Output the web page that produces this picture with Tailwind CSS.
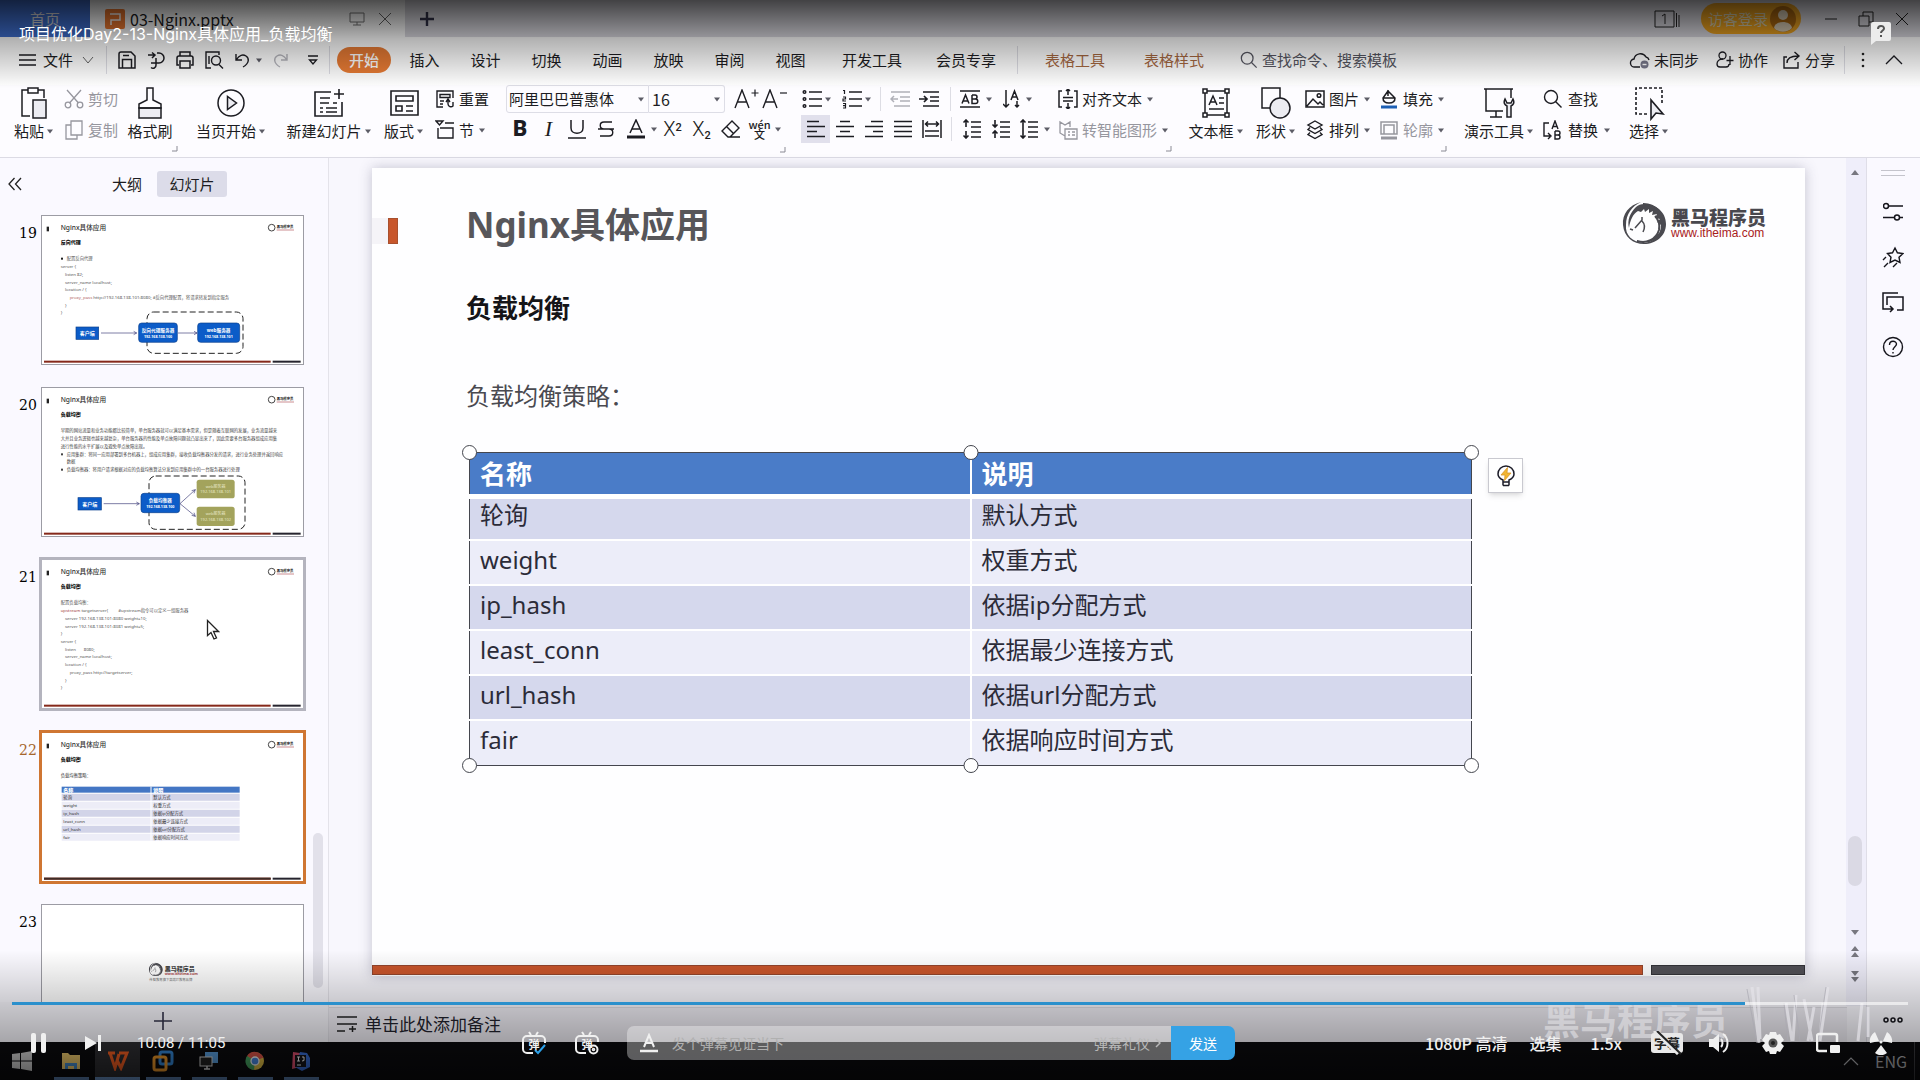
<!DOCTYPE html>
<html lang="zh-CN">
<head>
<meta charset="utf-8">
<meta name="viewport" content="width=device-width, initial-scale=1">
<title>项目优化Day2-13-Nginx具体应用_负载均衡</title>
<script src="https://cdn.jsdelivr.net/npm/@tailwindcss/browser@4"></script>
</head>
<body class="relative flex h-screen flex-col overflow-hidden bg-[#f8f7fd] font-['Noto_Sans_CJK_SC',sans-serif] text-[15px] leading-5 text-[#1c1c22]">

<!-- Icon sprite -->
<svg class="hidden" aria-hidden="true">
  <symbol id="caret" viewBox="0 0 8 5"><path d="M1 0.5h6L4 4.5z" fill="#5c5c66"/></symbol>
  <symbol id="corner" viewBox="0 0 6 6"><path d="M5 0v5H0" fill="none" stroke="#8a8a94"/></symbol>
  <symbol id="menu" viewBox="0 0 20 14" fill="none" stroke="currentColor" stroke-width="1.4"><path d="M1 2h17M1 7h17M1 12h17"/></symbol>
  <symbol id="chev-down" viewBox="0 0 14 10" fill="none" stroke="currentColor"><path d="M2 2l5 6 5-6"/></symbol>
  <symbol id="chev-up" viewBox="0 0 18 12" fill="none" stroke="currentColor" stroke-width="1.3"><path d="M1 10l8-8 8 8"/></symbol>
  <symbol id="save" viewBox="0 0 20 20" fill="none" stroke="currentColor" stroke-width="1.5"><path d="M2 4a2 2 0 012-2h10l4 4v12H2zM5.5 18V9.500h9V18M6 5.500h6"/></symbol>
  <symbol id="export" viewBox="0 0 20 20" fill="none" stroke="currentColor" stroke-width="1.5"><path d="M2 5h6M6 2.500l3 2.500-3 3M11 3h2a5 5 0 010 10H5M10 8v7a3 3 0 01-5 2.500"/></symbol>
  <symbol id="print" viewBox="0 0 20 20" fill="none" stroke="currentColor" stroke-width="1.5"><path d="M5 6V2h10v4M4 15H2V8a2 2 0 012-2h12a2 2 0 012 2v7h-2M5 11h10v7H5z"/></symbol>
  <symbol id="preview" viewBox="0 0 20 20" fill="none" stroke="currentColor" stroke-width="1.4"><path d="M7 18H2V2h13v3M15 14.500l4 4M5 6v8"/><circle cx="12" cy="10.500" r="4.500"/></symbol>
  <symbol id="undo" viewBox="0 0 18 18" fill="none" stroke="currentColor" stroke-width="1.400"><path d="M2 3v6h6M2.500 8.500C5 4 9 3 12 5s4 7-3 11"/></symbol>
  <symbol id="more-down" viewBox="0 0 12 12" fill="none" stroke="currentColor" stroke-width="1.300"><path d="M1 2h10M2.500 6h7L6 10z"/></symbol>
  <symbol id="search" viewBox="0 0 20 20" fill="none" stroke="currentColor" stroke-width="1.400"><circle cx="8" cy="8" r="6.500"/><path d="M12.500 12.500l6 6"/></symbol>
  <symbol id="cloud" viewBox="0 0 22 20" fill="none" stroke="currentColor" stroke-width="1.400"><path d="M11 17H6a4 4 0 01-1-8 6.500 6.500 0 0112-2 4 4 0 013 3"/><circle cx="15.500" cy="14.500" r="4" fill="#77778a" stroke="none"/><path d="M13.500 14.500h4" stroke="#fff"/></symbol>
  <symbol id="collab" viewBox="0 0 20 20" fill="none" stroke="currentColor" stroke-width="1.300"><circle cx="7.500" cy="5.500" r="3.500"/><path d="M8 9c-4 0-6 2-6 5 0 2 1 3 3 3h6c2 0 3-1 3-3M15 6v9M11.500 10.500h7"/></symbol>
  <symbol id="share" viewBox="0 0 20 20" fill="none" stroke="currentColor" stroke-width="1.400"><path d="M5 7H2v11h14v-6M5 13c0-5 4-7 11-7M12.500 2l4.500 4-4.500 4"/></symbol>
  <symbol id="paste" viewBox="0 0 30 36" fill="none" stroke="currentColor" stroke-width="1.500"><path d="M11 31H3V5h6M19 5h6v8M9 3h10v5H9z"/><rect x="14" y="15" width="13" height="18" fill="#ececf2"/></symbol>
  <symbol id="cut" viewBox="0 0 20 20" fill="none" stroke="currentColor" stroke-width="1.300"><circle cx="4" cy="16" r="2.800"/><circle cx="16" cy="16" r="2.800"/><path d="M3 1l11.500 13M17 1L5.500 14"/></symbol>
  <symbol id="copy" viewBox="0 0 20 20" fill="none" stroke="currentColor" stroke-width="1.300"><path d="M7 1h11v14H7zM7 5H2v14h11v-4"/></symbol>
  <symbol id="brush" viewBox="0 0 26 34" fill="none" stroke="currentColor" stroke-width="1.500"><path d="M2 22h22v10H2z" fill="#ececf2"/><path d="M10 2h6v12l8 4v4H2v-4l8-4z"/></symbol>
  <symbol id="play-o" viewBox="0 0 30 30" fill="none" stroke="currentColor" stroke-width="1.500"><circle cx="15" cy="15" r="13"/><path d="M11.500 8.500v13l9-6.500z" fill="#ececf2"/></symbol>
  <symbol id="new-slide" viewBox="0 0 32 30" fill="none" stroke="currentColor" stroke-width="1.600"><path d="M18 4H2v24h27V14M26 1v10M21 6h10M7 10h10M7 15h9M20 15h4M7 20h3M13 20h11M7 24h3M13 24h11"/></symbol>
  <symbol id="layout" viewBox="0 0 30 30" fill="none" stroke="currentColor" stroke-width="1.600"><path d="M2 3h27v24H2zM7 8h17v5H7zM7 18h6v5H7zM17 18h7M17 23h7"/></symbol>
  <symbol id="reset" viewBox="0 0 20 20" fill="none" stroke="currentColor" stroke-width="1.400"><path d="M18 9V2H2v16h6M5 5.500h10v3H5zM5 12h4M5 15h3M11 13l2-3 2 3M13 11v4a3 3 0 005 2v-4"/></symbol>
  <symbol id="section" viewBox="0 0 20 20" fill="none" stroke="currentColor" stroke-width="1.400"><path d="M1 1h7L4.500 5zM10 3h9M3 8v10h15V8H5"/></symbol>
  <symbol id="font-a" viewBox="0 0 18 20" fill="none" stroke="currentColor" stroke-width="1.400"><path d="M2 19L9 1l7 18M4.500 13h9"/></symbol>
  <symbol id="plus" viewBox="0 0 16 16" fill="none" stroke="currentColor" stroke-width="2.400"><path d="M8 1v14M1 8h14"/></symbol>
  <symbol id="eraser" viewBox="0 0 22 20" fill="none" stroke="currentColor" stroke-width="1.400"><path d="M2 12L12 2l7 7-9 9H8zM8 18h12"/><path d="M6.500 7.500l7 7"/></symbol>
  <symbol id="bullets" viewBox="0 0 20 20" fill="none" stroke="currentColor" stroke-width="1.500"><circle cx="2.500" cy="3" r="1.300"/><circle cx="2.500" cy="10" r="1.300"/><circle cx="2.500" cy="17" r="1.300"/><path d="M7 3h13M7 10h13M7 17h13"/></symbol>
  <symbol id="numbers" viewBox="0 0 20 20" fill="none" stroke="currentColor" stroke-width="1.500"><path d="M7 3h13M7 10h13M7 17h13"/><path d="M1 1.500h1.500V5M1 8h2.500v2H1v2h3M1 14.500h2.500V19H1M1 16.700h2.500" stroke-width="1.200"/></symbol>
  <symbol id="outdent" viewBox="0 0 20 20" fill="none" stroke="currentColor" stroke-width="1.500"><path d="M1 3h19M10 8h10M10 12h10M4 17h16M1 10h7M4 7l-3 3 3 3"/></symbol>
  <symbol id="indent" viewBox="0 0 20 20" fill="none" stroke="currentColor" stroke-width="1.700"><path d="M4 3h16M11 8h9M11 12h9M4 17h16M0 10h8M5 7l3 3-3 3"/></symbol>
  <symbol id="char-space" viewBox="0 0 22 20" fill="none" stroke="currentColor" stroke-width="1.500"><path d="M1 2h20M1 18h20M3 14.500L6.500 6l3.500 8.500M4 12h5M13 6v8.500h3.500a2 2 0 000-4.500H13M13 6h3a2 2 0 010 4"/></symbol>
  <symbol id="sort" viewBox="0 0 18 20" fill="none" stroke="currentColor" stroke-width="1.500"><path d="M3 1v17M0 15l3 3 3-3M8 11l3.500-9L15 11M9 8h5M14 12v6M12 16l2 2 2-2"/></symbol>
  <symbol id="al" viewBox="0 0 20 20" fill="none" stroke="currentColor" stroke-width="1.600"><path d="M1 2.500h12M1 7.500h18M1 12.500h10M1 17.500h18"/></symbol>
  <symbol id="ac" viewBox="0 0 20 20" fill="none" stroke="currentColor" stroke-width="1.600"><path d="M5 2.500h10M1 7.500h18M5 12.500h10M1 17.500h18"/></symbol>
  <symbol id="ar" viewBox="0 0 20 20" fill="none" stroke="currentColor" stroke-width="1.600"><path d="M7 2.500h12M1 7.500h18M9 12.500h10M1 17.500h18"/></symbol>
  <symbol id="aj" viewBox="0 0 20 20" fill="none" stroke="currentColor" stroke-width="1.600"><path d="M1 2.500h18M1 7.500h18M1 12.500h18M1 17.500h18"/></symbol>
  <symbol id="ad" viewBox="0 0 20 20" fill="none" stroke="currentColor" stroke-width="1.500"><path d="M1 1v18M19 1v18M4 5h12M6 2.500L3.500 5 6 7.500M14 2.500L16.500 5 14 7.500M3 12h14M3 17h14"/></symbol>
  <symbol id="para-b" viewBox="0 0 20 20" fill="none" stroke="currentColor" stroke-width="1.600"><path d="M9 3h10M9 8h10M9 13h10M9 18h10M4 8V1M1.500 3.500L4 1l2.500 2.500M4 12v7M1.500 16.500L4 19l2.500-2.500"/></symbol>
  <symbol id="para-a" viewBox="0 0 20 20" fill="none" stroke="currentColor" stroke-width="1.600"><path d="M9 3h10M9 8h10M9 13h10M9 18h10M4 1v7M1.500 5.500L4 8l2.500-2.500M4 19v-7M1.500 14.500L4 12l2.500 2.500"/></symbol>
  <symbol id="line-h" viewBox="0 0 20 20" fill="none" stroke="currentColor" stroke-width="1.600"><path d="M9 3h10M9 8h10M9 13h10M9 18h10M4 1v18M1.500 3.500L4 1l2.500 2.500M1.500 16.500L4 19l2.500-2.500"/></symbol>
  <symbol id="valign" viewBox="0 0 20 20" fill="none" stroke="currentColor" stroke-width="1.500"><path d="M4 2H1v16h3M16 2h3v16h-3M5 8.500h10M5 12h10M10 0v6M8 2l2-2 2 2M10 14v6M8 18l2 2 2-2"/></symbol>
  <symbol id="smart" viewBox="0 0 20 20" fill="none" stroke="currentColor" stroke-width="1.300"><path d="M7 16l-5-3V2l5 3 5-3v5M7 9h12v10H7zM10 12h2M14 12h3M10 15h2M14 15h3"/></symbol>
  <symbol id="textbox" viewBox="0 0 30 32" fill="none" stroke="currentColor" stroke-width="1.500"><path d="M4 4h22v24H4z"/><path d="M2 2h4v4H2zM24 2h4v4h-4zM2 26h4v4H2zM24 26h4v4h-4z" fill="#fff"/><path d="M8 18l4-9 4 9M9.500 15h5M18 11h5M18 16h5M8 22h15"/></symbol>
  <symbol id="shapes" viewBox="0 0 32 34" fill="none" stroke="currentColor" stroke-width="1.500"><path d="M2 2h18v20H2z"/><circle cx="20" cy="22" r="10" fill="#ececf2"/></symbol>
  <symbol id="picture" viewBox="0 0 20 20" fill="none" stroke="currentColor" stroke-width="1.500"><path d="M1 2h18v16H1zM2 17l6-7 5 5 2-2 3 3"/><circle cx="14" cy="6.500" r="1.800"/></symbol>
  <symbol id="layers" viewBox="0 0 20 20" fill="none" stroke="currentColor" stroke-width="1.400"><path d="M10 1l7 4-7 4-7-4zM5 7.500L3 9.500l7 4 7-4-2-2M5 12.500l-2 2 7 4 7-4-2-2"/></symbol>
  <symbol id="fill" viewBox="0 0 20 20" fill="none" stroke="currentColor" stroke-width="1.500"><path d="M9 1v6M9 2l7 7c0 3-2 5-6 5s-6-2-6-5zM4 9h12"/><path d="M2 18h16" stroke="#1d5fb4" stroke-width="3"/></symbol>
  <symbol id="outline" viewBox="0 0 20 20" fill="none" stroke="currentColor" stroke-width="1.500"><path d="M2 2h16v12H2zM5 14V5h10v9"/><path d="M2 18h16" stroke-width="3"/></symbol>
  <symbol id="present" viewBox="0 0 32 34" fill="none" stroke="currentColor" stroke-width="1.500"><path d="M1 3h29M3 3v22h17M28 3v9M13 25v6M7 31h12"/><path d="M22 13c-2 4 0 6 2 7v11h4V20c2-1 4-3 2-7l-2 4h-4z" fill="#ececf2"/></symbol>
  <symbol id="replace" viewBox="0 0 20 20" fill="none" stroke="currentColor" stroke-width="1.400"><path d="M6 3H1v13h6M5 13l3 3-3 3M9 9l3-8 3 8M10 6.500h4M12 11v8h3a2 2 0 000-4h-3M12 11h3a2 2 0 010 4"/></symbol>
  <symbol id="select" viewBox="0 0 32 34" fill="none" stroke="currentColor" stroke-width="1.600"><path d="M14 28H3V2h26v16" stroke-dasharray="3 2"/><path d="M18 14v19l5-6 7 1z" fill="#ececf2"/></symbol>
  <symbol id="scroll-up" viewBox="0 0 8 6"><path d="M4 0l4 5H0z" fill="#77777f"/></symbol>
  <!-- brand mark: horse head in a ring -->
  <symbol id="horse" viewBox="0 0 46 46"><path d="M22 4a20 19 0 11-6 37A17 17 0 0038 30c1-6-1-11-4-14" fill="none" stroke="#4a4a50" stroke-width="2"/><path d="M20 2C8 5 1 14 2 25c1 12 10 19 21 19 12 0 22-8 22-20C45 12 35 4 23 4c-3 0-6 1-8 3-6 6-9 13-7 21 1-8 4-14 9-17l3 1 3-3 1 3 4-3v4l4-2-1 4 5-1-2 4 5 1-3 3 4 3c0 10-7 17-17 18C11 42 4 35 5 25 5 14 11 6 20 2z" fill="#4a4a50"/><path d="M9 29l3 1M14 28l7-8v-3M21 21c3 3 3 7 1 11" fill="none" stroke="#4a4a50" stroke-width="1.500"/></symbol>
  <!-- frame shared by the slide miniatures -->
  <symbol id="mini-frame" viewBox="0 0 789 450">
    <rect x="17" y="35" width="7" height="14" fill="#222"/>
    <text x="59" y="46" font-size="20" fill="#333" font-weight="500">Nginx具体应用</text>
    <circle cx="692" cy="38" r="10" fill="none" stroke="#444" stroke-width="3"/>
    <text x="707" y="40" font-size="10" font-weight="900" fill="#333">黑马程序员</text>
    <rect x="707" y="44" width="52" height="2" fill="#b0565a"/>
    <rect x="9" y="437" width="680" height="6" fill="#85291a"/>
    <rect x="695" y="437" width="84" height="6" fill="#26242e"/>
  </symbol>
</svg>

<!-- Title bar -->
<header class="flex h-[37px] shrink-0 items-center bg-[#dcdbe2]">
  <button class="h-full w-[90px] bg-[#3f6fd0] text-[15px] text-[#d8d8dc]">首页</button>
  <div class="flex h-full w-[315px] items-center bg-white pr-3 pl-[15px] text-base">
    <span class="flex size-5 items-center justify-center rounded-[2px] bg-[#f07a30]"><svg class="size-4" viewBox="0 0 16 16" fill="none" stroke="#fff" stroke-width="1.500"><path d="M3 3h10v6H4v5"/></svg></span>
    <span class="ml-[5px]">03-Nginx.pptx</span>
    <svg class="ml-auto size-4" viewBox="0 0 16 16" fill="none" stroke="#777"><path d="M1 2h14v9H1zM8 11v3M4 14h8"/></svg>
    <button aria-label="关闭标签" class="ml-3"><svg class="size-4" viewBox="0 0 16 16" fill="none" stroke="#666"><path d="M2 2l12 12M14 2L2 14"/></svg></button>
  </div>
  <button aria-label="新建标签" class="ml-[14px] text-[#33334a]"><svg class="size-4"><use href="#plus"/></svg></button>
  <div class="ml-auto flex h-full items-center pr-[10px]">
    <svg class="mr-5 h-5 w-7" viewBox="0 0 28 20" fill="none" stroke="#222"><path d="M2 2h19v16H2zM23.500 4v14M26 6v12"/><path d="M9 7l3-2v10"/></svg>
    <button class="mr-[23px] flex h-[31px] w-[100px] items-center justify-between rounded-full bg-[#eea320] pr-1 pl-[7px] text-[15px] text-[#d8d0b0]">访客登录
      <svg class="size-7" viewBox="0 0 28 28"><circle cx="14" cy="14" r="13" fill="#b06a10"/><circle cx="14" cy="10" r="5" fill="#ddd0b8"/><path d="M5 23c1-8 17-8 18 0-5 5-13 5-18 0z" fill="#ddd0b8"/></svg>
    </button>
    <button aria-label="最小化" class="mr-5"><svg class="h-4 w-[14px]" viewBox="0 0 14 16" stroke="#222"><path d="M1 8h12"/></svg></button>
    <button aria-label="还原" class="mr-5"><svg class="size-4" viewBox="0 0 16 16" fill="none" stroke="#222"><path d="M1 5h10v10H1zM5 5V1h10v10h-4"/></svg></button>
    <button aria-label="关闭"><svg class="size-4" viewBox="0 0 16 16" fill="none" stroke="#222"><path d="M2 2l12 12M14 2L2 14"/></svg></button>
  </div>
</header>

<!-- Menu -->
<nav class="flex h-12 shrink-0 items-center bg-white pb-[2px]">
  <button class="flex w-[106px] items-center pl-[18px]"><svg class="h-[14px] w-5"><use href="#menu"/></svg><span class="mr-2 ml-[5px]">文件</span><svg class="h-[10px] w-[14px] text-[#666]"><use href="#chev-down"/></svg></button>
  <i class="h-7 w-px bg-[#dddde4]"></i>
  <div class="flex w-[222px] items-center pl-[10px]">
    <button aria-label="保存" class="mr-[9px]"><svg class="size-5"><use href="#save"/></svg></button>
    <button aria-label="输出" class="mr-[9px]"><svg class="size-5"><use href="#export"/></svg></button>
    <button aria-label="打印" class="mr-[9px]"><svg class="size-5"><use href="#print"/></svg></button>
    <button aria-label="打印预览" class="mr-[10px]"><svg class="size-5"><use href="#preview"/></svg></button>
    <button aria-label="撤销" class="flex items-center"><svg class="mr-[3px] size-[18px]"><use href="#undo"/></svg><svg class="h-[5px] w-2"><use href="#caret"/></svg></button>
    <button aria-label="恢复" class="ml-2 text-[#b5b5bc]"><svg class="size-[18px] -scale-x-100"><use href="#undo"/></svg></button>
    <button aria-label="自定义" class="ml-[18px]"><svg class="size-3"><use href="#more-down"/></svg></button>
  </div>
  <i class="h-7 w-px bg-[#dddde4]"></i>
  <button class="mr-[3px] ml-[7px] h-[26px] w-[54px] rounded-full bg-[#e67a34] font-medium text-white">开始</button>
  <button class="w-[61px]">插入</button><button class="w-[61px]">设计</button><button class="w-[61px]">切换</button><button class="w-[61px]">动画</button><button class="w-[61px]">放映</button><button class="w-[61px]">审阅</button><button class="w-[61px]">视图</button>
  <button class="w-[102px]">开发工具</button><button class="mr-2 w-[86px]">会员专享</button>
  <i class="h-7 w-px bg-[#dddde4]"></i>
  <button class="ml-2 w-[98px] text-[#a5673f]">表格工具</button><button class="w-[100px] text-[#a5673f]">表格样式</button>
  <label class="ml-4 flex items-center text-[#555560]"><svg class="mr-1 size-[18px]"><use href="#search"/></svg><input class="w-40 bg-transparent placeholder:text-[#555560]" placeholder="查找命令、搜索模板" aria-label="查找命令、搜索模板"></label>
  <div class="ml-auto flex items-center pr-[17px]">
    <button class="mr-4 flex items-center gap-[3px]"><svg class="h-5 w-[22px]"><use href="#cloud"/></svg>未同步</button>
    <button class="mr-[14px] flex items-center gap-[3px]"><svg class="size-5"><use href="#collab"/></svg>协作</button>
    <button class="mr-[9px] flex items-center gap-[3px]"><svg class="size-5"><use href="#share"/></svg>分享</button>
    <i class="h-7 w-px bg-[#dddde4]"></i>
    <button aria-label="更多" class="mr-5 ml-4"><svg class="h-4 w-1" viewBox="0 0 4 16" fill="#222"><circle cx="2" cy="2" r="1.300"/><circle cx="2" cy="8" r="1.300"/><circle cx="2" cy="14" r="1.300"/></svg></button>
    <button aria-label="收起功能区"><svg class="h-3 w-[18px]"><use href="#chev-up"/></svg></button>
  </div>
</nav>

<!-- Ribbon -->
<section class="flex h-[73px] shrink-0 border-b border-[#dcdbe4] bg-[#fdfcff] pl-[6px] whitespace-nowrap">
  <button class="flex w-14 flex-col items-center"><svg class="h-9 w-[30px]"><use href="#paste"/></svg><span class="flex items-center gap-[2px]">粘贴<svg class="h-[5px] w-2"><use href="#caret"/></svg></span></button>
  <div class="flex w-[60px] flex-col gap-[11px] pt-1 pl-[2px] text-[#96969e]">
    <button class="flex items-center gap-1"><svg class="size-5"><use href="#cut"/></svg>剪切</button>
    <button class="flex items-center gap-1"><svg class="size-5"><use href="#copy"/></svg>复制</button>
  </div>
  <button class="flex w-14 flex-col items-center"><svg class="h-9 w-[26px]"><use href="#brush"/></svg><span>格式刷</span></button>
  <svg class="mt-[61px] -ml-[6px] size-[6px]"><use href="#corner"/></svg>
  <button class="flex w-[106px] flex-col items-center"><svg class="h-9 w-[30px]"><use href="#play-o"/></svg><span class="flex items-center gap-[2px]">当页开始<svg class="h-[5px] w-2"><use href="#caret"/></svg></span></button>
  <button class="flex w-[90px] flex-col items-center"><svg class="h-9 w-8"><use href="#new-slide"/></svg><span class="flex items-center gap-[2px]">新建幻灯片<svg class="h-[5px] w-2"><use href="#caret"/></svg></span></button>
  <button class="flex w-[60px] flex-col items-center"><svg class="h-9 w-[30px]"><use href="#layout"/></svg><span class="flex items-center gap-[2px]">版式<svg class="h-[5px] w-2"><use href="#caret"/></svg></span></button>
  <div class="flex w-[72px] flex-col gap-[11px] pt-1 pl-[1px]">
    <button class="flex items-center gap-1"><svg class="size-5"><use href="#reset"/></svg>重置</button>
    <button class="flex items-center gap-1"><svg class="size-5"><use href="#section"/></svg>节<svg class="h-[5px] w-2"><use href="#caret"/></svg></button>
  </div>
  <!-- font group -->
  <div class="flex w-[294px] flex-col gap-[2px]">
    <div class="flex h-7 items-center">
      <label class="relative flex h-7 items-center"><select aria-label="字体" class="h-7 w-[143px] appearance-none rounded-l-[3px] border border-[#dddde6] pl-[2px]"><option>阿里巴巴普惠体</option></select><svg class="absolute right-1 h-[5px] w-2"><use href="#caret"/></svg></label>
      <label class="relative flex h-7 items-center"><select aria-label="字号" class="h-7 w-[76px] appearance-none rounded-r-[3px] border border-l-0 border-[#dddde6] pl-[3px] text-base"><option>16</option></select><svg class="absolute right-1 h-[5px] w-2"><use href="#caret"/></svg></label>
      <button aria-label="增大字号" class="ml-2 flex w-7 items-start"><svg class="h-5 w-[18px]"><use href="#font-a"/></svg><svg class="size-2"><use href="#plus"/></svg></button>
      <button aria-label="减小字号" class="flex w-7 items-start"><svg class="h-5 w-[18px]"><use href="#font-a"/></svg><svg class="size-2" viewBox="0 0 8 8" stroke="currentColor" stroke-width="1.200"><path d="M1 4h7"/></svg></button>
    </div>
    <div class="flex h-7 items-center font-['Roboto',sans-serif] text-xl">
      <button class="w-7 text-[22px] font-black">B</button>
      <button class="w-[29px] font-['Liberation_Serif',serif] text-[22px] italic">I</button>
      <button class="flex w-7 justify-center" aria-label="下划线"><svg class="size-5" viewBox="0 0 20 20" fill="none" stroke="currentColor" stroke-width="1.500"><path d="M4 1v8c0 7 12 7 12 0V1M1 19h18"/></svg></button>
      <button class="flex w-[30px] justify-center" aria-label="删除线"><svg class="size-5" viewBox="0 0 20 20" fill="none" stroke="currentColor" stroke-width="1.400"><path d="M16 3H8c-5 0-5 7 0 7h5c5 0 5 7 0 7H4M2 10h16"/></svg></button>
      <button class="flex w-[29px] justify-center" aria-label="字体颜色"><svg class="size-5" viewBox="0 0 20 20" fill="none" stroke="currentColor" stroke-width="1.500"><path d="M4 14l6-13 6 13M6 10h8"/><path d="M1 18h18" stroke-width="3"/></svg></button>
      <svg class="h-[5px] w-2"><use href="#caret"/></svg>
      <button class="w-[29px] font-light">X<sup class="text-[11px] font-medium">2</sup></button>
      <button class="w-[29px] font-light">X<sub class="text-[11px] font-medium">2</sub></button>
      <button class="flex w-[29px] justify-center" aria-label="清除格式"><svg class="h-5 w-[22px]"><use href="#eraser"/></svg></button>
      <button class="flex w-[29px] flex-col items-center font-['Noto_Sans_CJK_SC',sans-serif] text-[11px] leading-[10px] font-medium"><span>wén</span><span>文</span></button>
      <svg class="h-[5px] w-2"><use href="#caret"/></svg>
    </div>
    <svg class="mt-[2px] ml-[274px] size-[6px]"><use href="#corner"/></svg>
  </div>
  <!-- paragraph group -->
  <div class="flex w-[256px] flex-col gap-[2px]">
    <div class="flex h-7 items-center">
      <button aria-label="项目符号" class="flex w-10 items-center pl-[2px]"><svg class="mr-[2px] size-5"><use href="#bullets"/></svg><svg class="h-[5px] w-2"><use href="#caret"/></svg></button>
      <button aria-label="编号" class="flex w-10 items-center pl-[2px]"><svg class="mr-[2px] size-5"><use href="#numbers"/></svg><svg class="h-[5px] w-2"><use href="#caret"/></svg></button>
      <i class="mr-1 h-6 w-px bg-[#dddde4]"></i>
      <button aria-label="减少缩进" class="flex w-[29px] justify-center text-[#b0b0b8]"><svg class="size-5"><use href="#outdent"/></svg></button>
      <button aria-label="增加缩进" class="mr-[7px] flex w-[29px] justify-center"><svg class="size-5"><use href="#indent"/></svg></button>
      <i class="mr-2 h-6 w-px bg-[#dddde4]"></i>
      <button aria-label="字符间距" class="mr-[10px] flex items-center gap-1"><svg class="h-5 w-[22px]"><use href="#char-space"/></svg><svg class="h-[5px] w-2"><use href="#caret"/></svg></button>
      <button aria-label="文字方向" class="flex items-center gap-1"><svg class="h-5 w-[18px]"><use href="#sort"/></svg><svg class="h-[5px] w-2"><use href="#caret"/></svg></button>
    </div>
    <div class="flex h-7 items-center pl-[1px]">
      <button aria-label="左对齐" class="flex h-7 w-[29px] items-center justify-center bg-[#e1e0ec]"><svg class="size-5"><use href="#al"/></svg></button>
      <button aria-label="居中" class="flex w-[29px] justify-center"><svg class="size-5"><use href="#ac"/></svg></button>
      <button aria-label="右对齐" class="flex w-[29px] justify-center"><svg class="size-5"><use href="#ar"/></svg></button>
      <button aria-label="两端对齐" class="flex w-[29px] justify-center"><svg class="size-5"><use href="#aj"/></svg></button>
      <button aria-label="分散对齐" class="mr-[5px] flex w-[29px] justify-center"><svg class="size-5"><use href="#ad"/></svg></button>
      <i class="mr-[5px] h-6 w-px bg-[#dddde4]"></i>
      <button aria-label="段前间距" class="flex w-[29px] justify-center"><svg class="size-5"><use href="#para-b"/></svg></button>
      <button aria-label="段后间距" class="flex w-[29px] justify-center"><svg class="size-5"><use href="#para-a"/></svg></button>
      <button aria-label="行距" class="flex w-7 justify-center"><svg class="size-5"><use href="#line-h"/></svg></button>
      <svg class="h-[5px] w-2"><use href="#caret"/></svg>
    </div>
  </div>
  <div class="flex w-[125px] flex-col gap-[11px] pt-1 pl-[2px]">
    <button class="flex items-center gap-1"><svg class="size-5"><use href="#valign"/></svg>对齐文本<svg class="h-[5px] w-2"><use href="#caret"/></svg></button>
    <button class="flex items-center gap-1 text-[#96969e]"><svg class="size-5"><use href="#smart"/></svg>转智能图形<svg class="h-[5px] w-2"><use href="#caret"/></svg></button>
    <svg class="-mt-[5px] ml-[108px] size-[6px]"><use href="#corner"/></svg>
  </div>
  <button class="flex w-[70px] flex-col items-center"><svg class="h-9 w-[30px]"><use href="#textbox"/></svg><span class="flex items-center gap-[2px]">文本框<svg class="h-[5px] w-2"><use href="#caret"/></svg></span></button>
  <button class="flex w-[50px] flex-col items-center"><svg class="h-9 w-8"><use href="#shapes"/></svg><span class="flex items-center gap-[2px]">形状<svg class="h-[5px] w-2"><use href="#caret"/></svg></span></button>
  <div class="flex w-[76px] flex-col gap-[11px] pt-1 pl-1">
    <button class="flex items-center gap-1"><svg class="size-5"><use href="#picture"/></svg>图片<svg class="h-[5px] w-2"><use href="#caret"/></svg></button>
    <button class="flex items-center gap-1"><svg class="size-5"><use href="#layers"/></svg>排列<svg class="h-[5px] w-2"><use href="#caret"/></svg></button>
  </div>
  <div class="flex w-[87px] flex-col gap-[11px] pt-1 pl-[2px]">
    <button class="flex items-center gap-1"><svg class="size-5"><use href="#fill"/></svg>填充<svg class="h-[5px] w-2"><use href="#caret"/></svg></button>
    <button class="flex items-center gap-1 text-[#96969e]"><svg class="size-5"><use href="#outline"/></svg>轮廓<svg class="h-[5px] w-2"><use href="#caret"/></svg></button>
    <svg class="-mt-[5px] ml-[62px] size-[6px]"><use href="#corner"/></svg>
  </div>
  <button class="flex w-[70px] flex-col items-center"><svg class="h-9 w-8"><use href="#present"/></svg><span class="flex items-center gap-[2px]">演示工具<svg class="h-[5px] w-2"><use href="#caret"/></svg></span></button>
  <div class="flex w-[90px] flex-col gap-[11px] pt-1 pl-[9px]">
    <button class="flex items-center gap-[5px]"><svg class="size-5"><use href="#search"/></svg>查找</button>
    <button class="flex items-center gap-[5px]"><svg class="size-5"><use href="#replace"/></svg>替换<svg class="h-[5px] w-2"><use href="#caret"/></svg></button>
  </div>
  <button class="flex w-[50px] flex-col items-center"><svg class="h-9 w-8"><use href="#select"/></svg><span class="flex items-center gap-[2px]">选择<svg class="h-[5px] w-2"><use href="#caret"/></svg></span></button>
</section>

<!-- Workspace -->
<main class="flex min-h-0 flex-1">
  <!-- Slide list -->
  <aside class="relative flex w-[329px] shrink-0 flex-col border-r border-[#e4e3ea] bg-[#faf9ff]">
    <div class="flex h-14 shrink-0 items-center pb-1 text-[15px]">
      <button aria-label="折叠" class="w-[112px] pl-2"><svg class="size-[14px]" viewBox="0 0 14 14" fill="none" stroke="#222" stroke-width="1.300"><path d="M6.500 1L1 7l5.500 6M13 1L7.500 7l5.500 6"/></svg></button>
      <button>大纲</button>
      <button class="ml-[15px] h-[26px] w-[70px] rounded-[3px] bg-[#dcdce9]">幻灯片</button>
    </div>
    <ol class="flex min-h-0 flex-1 flex-col gap-[22px] overflow-hidden font-['DejaVu_Serif',serif] text-sm text-black">
      <li class="flex shrink-0 pt-px"><span class="w-[41px] pt-2 pl-[19px]">19</span>
        <svg class="h-[150px] w-[263px] bg-white font-['Noto_Sans','Noto_Sans_CJK_SC',sans-serif] outline-1 -outline-offset-1 outline-[#9c9ca4]" viewBox="0 0 789 450" fill="#555" font-size="13">
          <use href="#mini-frame"/>
          <text x="59" y="88" font-size="15" font-weight="900" fill="#111">反向代理</text>
          <rect x="60" y="128" width="6" height="6" fill="#222"/><text x="77" y="136">配置反向代理</text>
          <text x="59" y="159">server {</text><text x="72" y="182">listen 82;</text><text x="72" y="206">server_name localhost;</text><text x="72" y="229">location / {</text>
          <text x="86" y="252"><tspan fill="#b06060">proxy_pass</tspan> http://192.168.138.101:8080; #反向代理配置，将请求转发到指定服务</text>
          <text x="72" y="275">}</text><text x="59" y="298">}</text>
          <rect x="318" y="291" width="288" height="124" rx="20" fill="none" stroke="#222" stroke-width="3" stroke-dasharray="18 9"/>
          <g fill="#0c5cc8" stroke="#0a3f8c" stroke-width="2"><rect x="105" y="336" width="68" height="37"/><rect x="293" y="324" width="116" height="58" rx="9"/><rect x="470" y="324" width="126" height="58" rx="9"/></g>
          <path d="M180 354h107m-9-5l9 5-9 5M411 354h57m-9-5l9 5-9 5" fill="none" stroke="#3c3c78" stroke-width="2"/>
          <g fill="#fff" text-anchor="middle" font-weight="700"><text x="139" y="359" font-size="15">客户端</text><text x="351" y="350" font-size="14">反向代理服务器</text><text x="351" y="368" font-size="11">192.168.138.100</text><text x="533" y="350" font-size="14">web服务器</text><text x="533" y="368" font-size="11">192.168.138.101</text></g>
        </svg></li>
      <li class="flex shrink-0"><span class="w-[41px] pt-2 pl-[19px]">20</span>
        <svg class="h-[150px] w-[263px] bg-white font-['Noto_Sans','Noto_Sans_CJK_SC',sans-serif] outline-1 -outline-offset-1 outline-[#9c9ca4]" viewBox="0 0 789 450" fill="#444" font-size="13">
          <use href="#mini-frame"/>
          <text x="59" y="88" font-size="15" font-weight="900" fill="#111">负载均衡</text>
          <text x="59" y="136">早期的网站流量和业务功能都比较简单，单台服务器就可以满足基本需求，但是随着互联网的发展，业务流量越来</text>
          <text x="59" y="159">大并且业务逻辑也越来越复杂，单台服务器的性能及单点故障问题就凸显出来了，因此需要多台服务器组成应用集</text>
          <text x="59" y="182">进行性能的水平扩展以及避免单点故障出现。</text>
          <rect x="60" y="199" width="6" height="6"/><text x="77" y="206">应用集群：将同一应用部署到多台机器上，组成应用集群，接收负载均衡器分发的请求，进行业务处理并返回响应</text>
          <text x="77" y="229">数据</text>
          <rect x="60" y="245" width="6" height="6"/><text x="77" y="252">负载均衡器：将用户请求根据对应的负载均衡算法分发到应用集群中的一台服务器进行处理</text>
          <rect x="324" y="267" width="288" height="160" rx="20" fill="none" stroke="#222" stroke-width="3" stroke-dasharray="18 9"/>
          <g fill="#0c5cc8" stroke="#0a3f8c" stroke-width="2"><rect x="111" y="332" width="70" height="37"/><rect x="300" y="319" width="116" height="58" rx="9"/></g>
          <g fill="#a3a35c"><rect x="467" y="278" width="114" height="56" rx="8"/><rect x="467" y="359" width="114" height="58" rx="8"/></g>
          <path d="M188 350h107m-9-5l9 5-9 5M417 350l46-42m-11 3l11-3-4 11M417 350l46 38m-11-3l11 3-4-11" fill="none" stroke="#3c3c78" stroke-width="2"/>
          <g fill="#fff" text-anchor="middle" font-weight="700"><text x="146" y="356" font-size="15">客户端</text><text x="358" y="346" font-size="14">负载均衡器</text><text x="358" y="364" font-size="11">192.168.138.100</text></g>
          <g fill="#e6e6c4" text-anchor="middle" font-size="12"><text x="524" y="302">web服务器</text><text x="524" y="319">192.168.138.101</text><text x="524" y="384">web服务器</text><text x="524" y="401">192.168.138.102</text></g>
        </svg></li>
      <li class="flex shrink-0"><span class="w-[41px] pt-2 pl-[19px]">21</span>
        <svg class="h-[150px] w-[263px] bg-white font-['Noto_Sans','Noto_Sans_CJK_SC',sans-serif] ring-2 ring-[#b4b4be] outline-1 -outline-offset-1 outline-[#b4b4be]" viewBox="0 0 789 450" fill="#555" font-size="13">
          <use href="#mini-frame"/>
          <text x="59" y="88" font-size="15" font-weight="900" fill="#111">负载均衡</text>
          <text x="59" y="136">配置负载均衡：</text>
          <text x="59" y="159"><tspan fill="#a04040">upstream</tspan> targetserver{</text><text x="232" y="159">#upstream指令可以定义一组服务器</text>
          <text x="72" y="182">server 192.168.138.101:8080 weight=10;</text><text x="72" y="206">server 192.168.138.101:8081 weight=5;</text><text x="59" y="229">}</text>
          <text x="59" y="252">server {</text><text x="72" y="275">listen</text><text x="128" y="275">8080;</text><text x="72" y="298">server_name localhost;</text><text x="72" y="321">location / {</text><text x="86" y="345">proxy_pass http://targetserver;</text><text x="72" y="368">}</text><text x="59" y="391">}</text>
        </svg></li>
      <li class="flex shrink-0 pt-px"><span class="w-[41px] pt-2 pl-[19px] text-[#a5652c]">22</span>
        <svg class="h-[150px] w-[263px] bg-white font-['Noto_Sans','Noto_Sans_CJK_SC',sans-serif] ring-2 ring-[#cf7632] outline-1 -outline-offset-1 outline-[#cf7632]" viewBox="0 0 789 450" fill="#333" font-size="13">
          <use href="#mini-frame"/><rect x="9" y="437" width="680" height="6" fill="#3f2c26"/>
          <text x="59" y="88" font-size="15" font-weight="900" fill="#111">负载均衡</text>
          <text x="59" y="136">负载均衡策略：</text>
          <rect x="62" y="164" width="534" height="18" fill="#4376c4"/>
          <path d="M62 185h534v21H62zM62 233h534v21H62zM62 281h534v21H62z" fill="#d2d4e8"/>
          <path d="M62 209h534v21H62zM62 257h534v21H62zM62 305h534v21H62z" fill="#ededf7"/>
          <path d="M330 164v162" stroke="#fff" stroke-width="3"/>
          <g fill="#fff" font-size="15" font-weight="900"><text x="67" y="179">名称</text><text x="337" y="179">说明</text></g>
          <text x="67" y="200">轮询</text><text x="67" y="224">weight</text><text x="67" y="248">ip_hash</text><text x="67" y="272">least_conn</text><text x="67" y="296">url_hash</text><text x="67" y="320">fair</text>
          <text x="337" y="200">默认方式</text><text x="337" y="224">权重方式</text><text x="337" y="248">依据ip分配方式</text><text x="337" y="272">依据最少连接方式</text><text x="337" y="296">依据url分配方式</text><text x="337" y="320">依据响应时间方式</text>
        </svg></li>
      <li class="flex shrink-0"><span class="w-[41px] pt-2 pl-[19px]">23</span>
        <svg class="h-[150px] w-[263px] bg-white font-['Noto_Sans','Noto_Sans_CJK_SC',sans-serif] outline-1 -outline-offset-1 outline-[#9c9ca4]" viewBox="0 0 789 450">
          <svg x="322" y="174" width="44" height="44"><use href="#horse"/></svg>
          <text x="371" y="201" font-size="18" font-weight="900" fill="#444">黑马程序员</text>
          <text x="371" y="213" font-size="11" font-weight="700" fill="#a8484c">www.itheima.com</text>
          <text x="325" y="231" font-size="10" fill="#777">传智教育旗下高端IT教育品牌</text>
        </svg></li>
    </ol>
    <div class="absolute top-[675px] right-[5px] h-[155px] w-[10px] rounded-full bg-[#e2e1ea]"></div>
    <div class="flex h-10 shrink-0 items-center justify-center bg-[#f6f5fb] pr-[2px] pb-[2px]"><button aria-label="新建幻灯片" class="text-[#33334a]"><svg class="size-5" viewBox="0 0 20 20" stroke="currentColor" stroke-width="1.600"><path d="M10 1v18M1 10h18"/></svg></button></div>
    <!-- mouse pointer -->
    <svg class="absolute top-[461px] left-[206px] h-[21px] w-[14px]" viewBox="0 0 14 21"><path d="M1.500 1.500v15l3.500-3 3 6.500 2.500-1L7.500 12.500h5z" fill="#fff" stroke="#222" stroke-width="1.300"/></svg>
  </aside>

  <div class="flex min-w-0 flex-1 flex-col">
    <div class="flex min-h-0 flex-1 bg-[#f8f7fd] pt-[10px] pr-[42px] pb-[31px] pl-[43px]">
      <!-- Slide -->
      <article class="flex flex-1 flex-col bg-[#fefeff] shadow-[0_0_12px_rgba(60,60,90,0.28)]">
        <div class="flex items-start pt-8 pr-[39px]">
          <i class="mt-[18px] h-[26px] w-4 bg-[#f5f4f8]"></i><i class="mt-[18px] mr-[68px] h-[26px] w-[10px] border border-[#a8502e] bg-[#c8572c]"></i>
          <h1 class="mt-[2px] font-['Noto_Sans','Noto_Sans_CJK_SC',sans-serif] text-[35px] leading-[46px] font-bold text-[#57565a]">Nginx具体应用</h1>
          <div class="ml-auto flex items-center gap-1">
            <svg class="size-[46px]"><use href="#horse"/></svg>
            <div class="flex flex-col items-start"><b class="text-[19px] leading-[19px] font-black text-[#49484e]">黑马程序员</b><a href="#" class="font-['Liberation_Sans',sans-serif] text-xs leading-[14px] text-[#a8201c]">www.itheima.com</a></div>
          </div>
        </div>
        <div class="flex flex-1 flex-col items-start pl-[94px] font-['Noto_Sans','Noto_Sans_CJK_SC',sans-serif]">
          <h2 class="mt-[42px] text-[26px] leading-9 font-bold text-[#151518]">负载均衡</h2>
          <p class="mt-[52px] text-2xl leading-9 text-[#4a4a50]">负载均衡策略：</p>
          <div class="relative mt-[38px] ml-[3px] flex w-[75%] max-w-[1003px]">
            <table class="w-full table-fixed border-collapse border border-[#44464e] text-left text-2xl leading-8 text-[#2b2b38]">
              <thead><tr class="h-11 border-b-[5px] border-white bg-[#4a7cc8] text-[26px] text-white"><th class="border-r-2 border-r-white px-[10px] font-bold">名称</th><th class="px-[10px] font-bold">说明</th></tr></thead>
              <tbody>
                <tr class="h-[43px] border-b-2 border-white bg-[#d5d8ed]"><td class="border-r-2 border-white px-[10px] pb-2">轮询</td><td class="px-[10px] pb-2">默认方式</td></tr>
                <tr class="h-[45px] border-b-2 border-white bg-[#ecedf9]"><td class="border-r-2 border-white px-[10px] pb-[6px]">weight</td><td class="px-[10px] pb-[6px]">权重方式</td></tr>
                <tr class="h-[45px] border-b-2 border-white bg-[#d5d8ed]"><td class="border-r-2 border-white px-[10px] pb-[6px]">ip_hash</td><td class="px-[10px] pb-[6px]">依据ip分配方式</td></tr>
                <tr class="h-[45px] border-b-2 border-white bg-[#ecedf9]"><td class="border-r-2 border-white px-[10px] pb-[6px]">least_conn</td><td class="px-[10px] pb-[6px]">依据最少连接方式</td></tr>
                <tr class="h-[45px] border-b-2 border-white bg-[#d5d8ed]"><td class="border-r-2 border-white px-[10px] pb-[6px]">url_hash</td><td class="px-[10px] pb-[6px]">依据url分配方式</td></tr>
                <tr class="h-[45px] bg-[#ecedf9]"><td class="border-r-2 border-white px-[10px] pb-[6px]">fair</td><td class="px-[10px] pb-[6px]">依据响应时间方式</td></tr>
              </tbody>
            </table>
            <!-- selection handles -->
            <i class="absolute -top-[7px] -left-[7px] size-[15px] rounded-full border border-[#44464e] bg-white"></i>
            <i class="absolute -top-[7px] left-1/2 size-[15px] -translate-x-1/2 rounded-full border border-[#44464e] bg-white"></i>
            <i class="absolute -top-[7px] -right-[7px] size-[15px] rounded-full border border-[#44464e] bg-white"></i>
            <i class="absolute -bottom-[7px] -left-[7px] size-[15px] rounded-full border border-[#44464e] bg-white"></i>
            <i class="absolute -bottom-[7px] left-1/2 size-[15px] -translate-x-1/2 rounded-full border border-[#44464e] bg-white"></i>
            <i class="absolute -right-[7px] -bottom-[7px] size-[15px] rounded-full border border-[#44464e] bg-white"></i>
            <button aria-label="智能美化" class="absolute top-[6px] left-full ml-4 flex size-[35px] items-center justify-center border border-[#c9c9d0] bg-white shadow-md">
              <svg class="h-[22px] w-5" viewBox="0 0 20 22" fill="none" stroke="#1c1c28" stroke-width="1.500"><path d="M7 17v-2C3.500 13.500 2 11.500 2 9a8 8 0 0116 0c0 2.500-1.500 4.500-5 6v2zM7 20.500h6M7 17v3.500M13 17v3.500"/><path d="M11.500 2.500L5 10h4l-.5 5.500 6.500-7.500h-4z" fill="#f2b632" stroke="#d8952a" stroke-width=".8"/></svg>
            </button>
          </div>
        </div>
        <div class="flex shrink-0 gap-2 pb-[1px]"><i class="h-[10px] flex-1 border border-[#93452c] bg-[#c9552b]"></i><i class="h-[10px] w-[154px] border border-[#333338] bg-[#515056]"></i></div>
      </article>
    </div>
    <label class="flex h-[35px] shrink-0 items-center border-t border-[#dcdbe2] bg-[#efedf4] pb-[2px] pl-2">
      <svg class="mr-2 h-4 w-5" viewBox="0 0 20 16" fill="none" stroke="#222" stroke-width="1.500"><path d="M0 1h20M0 8h20M0 15h8M12 13h7M15.500 10v6"/></svg>
      <input class="w-96 bg-transparent text-[17px] text-[#22222c] placeholder:text-[#22222c]" placeholder="单击此处添加备注" aria-label="备注">
    </label>
  </div>

  <!-- Vertical scrollbar -->
  <div class="-ml-px mb-9 flex w-5 shrink-0 flex-col items-center bg-[#efeefa] pt-3 pr-[2px]">
    <svg class="h-[6px] w-2"><use href="#scroll-up"/></svg>
    <div class="mt-[660px] h-[50px] w-[14px] shrink-0 rounded-full bg-[#dad9e4]"></div>
    <svg class="mt-auto h-[6px] w-2 -scale-y-100"><use href="#scroll-up"/></svg>
    <svg class="mt-[11px] h-3 w-2" viewBox="0 0 8 12" fill="#77777f"><path d="M4 0l4 5H0zM4 6l4 5H0z"/></svg>
    <svg class="mt-3 mb-6 h-3 w-2 -scale-y-100" viewBox="0 0 8 12" fill="#77777f"><path d="M4 0l4 5H0zM4 6l4 5H0z"/></svg>
  </div>

  <!-- Task pane strip -->
  <aside class="flex w-[54px] shrink-0 flex-col items-center border-l border-[#dfdee8] bg-[#faf9ff] pt-3 pr-[2px] text-[#15151c]">
    <i class="h-[6px] w-6 border-y border-[#c4c4cc]"></i>
    <button aria-label="属性" class="mt-[26px]"><svg class="size-5" viewBox="0 0 20 20" fill="none" stroke="currentColor" stroke-width="1.500"><circle cx="3" cy="4" r="2.500"/><circle cx="14" cy="15.500" r="2.500"/><path d="M5.500 4H20M0 15.500h11.500M16.500 15.500H20"/></svg></button>
    <button aria-label="动画" class="mt-6"><svg class="size-[22px]" viewBox="0 0 22 22" fill="none" stroke="currentColor" stroke-width="1.400"><path d="M13 2l2.400 4.800 5.600.7-4 3.700 1 5.300-5-2.500-5 2.500 1-5.300-3.500-3.700 5-.7zM1 14l3-3M2 21l4-4M11 21l4-4"/></svg></button>
    <button aria-label="切换" class="mt-[23px]"><svg class="size-[22px]" viewBox="0 0 22 22" fill="none" stroke="currentColor" stroke-width="1.500"><path d="M16 2H1v16h9M5 14V6h16v13h-6M8 15l3 3-3 3"/></svg></button>
    <button aria-label="帮助" class="mt-[23px]"><svg class="size-[22px]" viewBox="0 0 22 22" fill="none" stroke="currentColor" stroke-width="1.400"><circle cx="11" cy="11" r="9.500"/><path d="M7.500 9c0-5 7-4.500 7-1 0 2.500-3.500 3-3.500 6M11 16v1.500"/></svg></button>
    <button aria-label="更多" class="mt-auto mb-[19px]"><svg class="h-[6px] w-5" viewBox="0 0 20 6" fill="none" stroke="currentColor" stroke-width="1.500"><circle cx="3" cy="3" r="2"/><circle cx="10" cy="3" r="2"/><circle cx="17" cy="3" r="2"/></svg></button>
  </aside>
</main>

<!-- Windows taskbar -->
<footer class="flex h-[38px] shrink-0 items-end bg-[#0b0b0e]">
  <button aria-label="开始" class="flex h-full w-[51px] items-center pl-3"><svg class="size-5" viewBox="0 0 20 20" fill="#d8d8d8"><path d="M0 3l8-1v7.500H0zM9 2l11-2v9.500H9zM0 10.500h8V18l-8-1zM9 10.500h11V20L9 18z"/></svg></button>
  <button aria-label="资源管理器" class="flex h-full w-10 flex-col items-center justify-between pt-[9px]"><svg class="size-5" viewBox="0 0 20 20"><path d="M1 2h6l2 2h10v14H1z" fill="#f5d070"/><path d="M4 18v-6h12v6h-3v-3H7v3z" fill="#4a90d0"/></svg><i class="h-[3px] w-[35px] bg-[#5f86b8]"></i></button>
  <button aria-label="WPS" class="ml-1 flex h-full w-[45px] flex-col items-center justify-between bg-[#2e2e32] pt-[9px]"><svg class="h-5 w-[22px]" viewBox="0 0 22 20" fill="none" stroke="#fa6022" stroke-width="3"><path d="M1 2h7M3 2l5 15 4-14M10 9l4 8 6-15h-8"/></svg><i class="h-[3px] w-full bg-[#6f9ad0]"></i></button>
  <button aria-label="VMware" class="ml-[3px] flex h-full w-10 flex-col items-center justify-between pt-2"><svg class="size-[22px]" viewBox="0 0 22 22" fill="none" stroke-width="3"><rect x="8" y="2" width="12" height="12" rx="2" stroke="#3488d8"/><rect x="2" y="7" width="12" height="13" rx="2" stroke="#f09a2a"/></svg><i class="h-[3px] w-[35px] bg-[#5f86b8]"></i></button>
  <button aria-label="远程桌面" class="ml-[6px] flex h-full w-10 flex-col items-center justify-between pt-[9px]"><svg class="size-5" viewBox="0 0 20 20"><rect x="6" y="1" width="13" height="11" fill="#5a9fe0"/><rect x="1" y="6" width="12" height="9" fill="#222" stroke="#ddd"/><path d="M5 18h6M8 15v3" stroke="#ddd" stroke-width="1.500"/></svg><i class="h-[3px] w-[35px] bg-[#5f86b8]"></i></button>
  <button aria-label="Chrome" class="ml-[6px] flex h-full w-10 flex-col items-center justify-between pt-[9px]"><svg class="size-5" viewBox="0 0 20 20"><circle cx="10" cy="10" r="9" fill="#e8c448"/><path d="M10 10L2 5a9.500 9.500 0 0116.500 1.500z" fill="#e0564a"/><path d="M10 10L2 5a9 9 0 007 14z" fill="#48a864"/><circle cx="10" cy="10" r="4" fill="#4a8ae8" stroke="#fff" stroke-width="1.300"/></svg><i class="h-[3px] w-[35px] bg-[#5f86b8]"></i></button>
  <button aria-label="IntelliJ IDEA" class="ml-[6px] flex h-full w-10 flex-col items-center justify-between pt-[9px]"><svg class="size-5" viewBox="0 0 20 20"><path d="M2 1l7 1v14l-8 2z" fill="#e05070"/><path d="M9 1l7 1 3 5v9l-8 4-7-4z" fill="#3a70d8"/><rect x="4" y="4" width="11" height="12" fill="#15151a"/><path d="M6 6h3M7.500 6v4M6 10h3M11 6h2v3.500l-2 .5M6 14h4" fill="none" stroke="#fff"/></svg><i class="h-[3px] w-[35px] bg-[#5f86b8]"></i></button>
  <div class="ml-auto flex h-full items-center text-[#b4b4b8]"><svg class="mr-4 h-3 w-4" viewBox="0 0 16 12" fill="none" stroke="currentColor" stroke-width="1.200"><path d="M1 10l7-7 7 7"/></svg><span class="mr-[7px] text-base">ENG</span><i class="mr-[5px] h-full w-px bg-[#3a3a3e]"></i></div>
</footer>

<!-- Video player overlay -->
<div class="pointer-events-none absolute inset-x-0 top-0 h-[88px] bg-linear-to-b from-black/70 from-0% via-black/30 via-45% to-transparent"></div>
<div class="pointer-events-none absolute inset-x-0 bottom-0 h-[130px] bg-linear-to-t from-black/60 from-0% via-black/32 via-30% to-transparent"></div>

<!-- Watermark -->
<div class="pointer-events-none absolute right-[38px] bottom-[37px] flex items-end gap-4" aria-hidden="true">
  <span class="text-[37px] leading-[48px] font-bold text-[#dddce0]/70">黑马程序员</span>
  <svg class="h-[60px] w-[138px]" viewBox="0 0 138 60" fill="none" stroke="#e4e3e8" stroke-opacity=".7" stroke-width="3"><path d="M8 4l7 56M14 4l2 52M42 20l6 38M52 12l-3 46M60 16l8 42M70 24l-6 34M84 4l-8 54M79 20l-3 36M118 20l-4 38M124 24v30"/><path d="M3 6l10 54M40 20l4 38M50 12l6 46M82 4l-8 54" stroke="#a9a8b0" stroke-width="1"/></svg>
</div>

<div class="absolute top-[22px] left-[19px] font-['Inter','Noto_Sans_CJK_SC',sans-serif] text-base leading-6 text-white">项目优化Day2-13-Nginx具体应用_负载均衡</div>
<button aria-label="反馈" class="absolute top-[22px] right-[29px]"><svg class="h-6 w-5" viewBox="0 0 20 24"><path d="M2 0h16a2 2 0 012 2v15a2 2 0 01-2 2H5l-5 4V2a2 2 0 012-2z" fill="#ececec"/><path d="M7 7c0-4 6-4 6-.5 0 2-3 2-3 4.500M10 13v2" fill="none" stroke="#555" stroke-width="2"/></svg></button>

<div class="absolute inset-x-0 bottom-5 flex flex-col text-[#f0f0f0]">
  <div class="mx-3 mb-[21px] flex h-[3px] bg-white/60" role="progressbar" aria-label="播放进度" aria-valuenow="91" aria-valuemin="0" aria-valuemax="100"><i class="h-full bg-[#2b90cc]" style="width:91.400%"></i></div>
  <div class="flex h-[34px] items-center">
    <button aria-label="暂停" class="ml-[31px]"><svg class="h-5 w-4" viewBox="0 0 16 20" fill="currentColor"><rect x="0" width="5" height="20" rx="2"/><rect x="10" width="5" height="20" rx="2"/></svg></button>
    <button aria-label="下一个" class="ml-[38px]"><svg class="size-4" viewBox="0 0 16 16" fill="currentColor"><path d="M0 1l12 7-12 7zM13 0h3v16h-3z"/></svg></button>
    <time class="ml-9 w-[195px] font-['Roboto',sans-serif] text-[15px]">10:08 / 11:05</time>
    <div class="ml-auto flex items-center">
      <button aria-label="弹幕开关" class="relative mr-[29px] size-6"><svg class="size-6" viewBox="0 0 24 24" fill="none" stroke="currentColor" stroke-width="2"><path d="M7 1l2 3M16 1l-2 3M23 12V9a4 4 0 00-4-4H5a4 4 0 00-4 4v9a4 4 0 004 4h6"/><path d="M13 19l3 3 7-8" stroke="#2ba0e8"/></svg><span class="absolute inset-x-0 top-[7px] text-[11px] leading-[13px] font-bold">弹</span></button>
      <button aria-label="弹幕设置" class="relative mr-7 size-6"><svg class="size-6" viewBox="0 0 24 24" fill="none" stroke="currentColor" stroke-width="2"><path d="M7 1l2 3M16 1l-2 3M23 11V9a4 4 0 00-4-4H5a4 4 0 00-4 4v9a4 4 0 004 4h6"/><circle cx="18.500" cy="18.500" r="4"/><circle cx="18.500" cy="18.500" r=".8"/></svg><span class="absolute inset-x-0 top-[7px] text-[11px] leading-[13px] font-bold">弹</span></button>
      <form class="flex h-[34px] w-[608px] overflow-hidden rounded-[7px] text-sm">
        <label class="flex flex-1 items-center bg-white/35 pl-3"><svg class="mr-[13px] size-5" viewBox="0 0 20 20" fill="none" stroke="currentColor" stroke-width="2"><path d="M5 14L10 2l5 12M7 10h6"/><path d="M1 18h18" stroke-width="2.500"/></svg><input class="w-72 bg-transparent placeholder:text-[#b0b0b0]" placeholder="发个弹幕见证当下" aria-label="发个弹幕见证当下"><a href="#" class="mr-[10px] ml-auto flex items-center gap-[5px] text-[#b8b8b8]">弹幕礼仪<svg class="h-[10px] w-[6px]" viewBox="0 0 6 10" fill="none" stroke="currentColor" stroke-width="1.500"><path d="M1 1l4 4-4 4"/></svg></a></label>
        <button type="button" class="w-16 bg-[#35a2e5] text-white">发送</button>
      </form>
    </div>
    <div class="ml-auto flex items-center pr-[27px] text-base font-medium">
      <button class="mr-[22px]">1080P 高清</button><button class="mr-[29px]">选集</button><button class="mr-[29px]">1.5x</button>
      <button aria-label="字幕" class="relative mr-6 h-6 w-8 text-[#222]"><svg class="absolute inset-0 h-6 w-8" viewBox="0 0 32 24"><rect x="0" y="2" width="32" height="20" rx="3" fill="#e8e8e8"/></svg><span class="absolute inset-0 text-[13px] leading-6 font-bold">字幕</span><svg class="absolute inset-0 h-6 w-8" viewBox="0 0 32 24" fill="none"><path d="M3 0l24 23" stroke="#e8e8e8" stroke-width="3"/><path d="M6 0l24 23" stroke="#222" stroke-width="2"/></svg></button>
      <button aria-label="音量" class="mr-8"><svg class="size-[22px]" viewBox="0 0 22 22" fill="none" stroke="currentColor" stroke-width="2"><path d="M2 7h4l6-5v18l-6-5H2z" fill="currentColor" stroke="none"/><path d="M14 7c2 2 2 6 0 8M16 2c6 4 6 14 0 18"/></svg></button>
      <button aria-label="设置" class="mr-[31px]"><svg class="size-6" viewBox="0 0 24 24"><path d="M9 1h6l1 3 3-1 4 6-3 3 3 3-4 6-3-1-1 3H9l-1-3-3 1-4-6 3-3-3-3 4-6 3 1z" fill="currentColor"/><circle cx="12" cy="12" r="4.500" fill="#555"/><circle cx="12" cy="12" r="2" fill="#222"/></svg></button>
      <button aria-label="画中画" class="mr-[29px]"><svg class="size-6" viewBox="0 0 24 24" fill="none" stroke="currentColor" stroke-width="2.500"><path d="M21 11V5a2 2 0 00-2-2H3a2 2 0 00-2 2v13a2 2 0 002 2h8"/><rect x="14" y="14" width="10" height="8" rx="1" fill="currentColor" stroke="none"/></svg></button>
      <button aria-label="网页全屏"><svg class="size-6" viewBox="0 0 24 24" fill="currentColor"><path d="M10 10L1 12C0 7 3 3 6 1zM14 10l9 2c1-5-2-9-5-11zM12 14l-6 8c4 3 8 3 12 0z"/><circle cx="12" cy="11" r="1.500"/></svg></button>
    </div>
  </div>
</div>
</body>
</html>
